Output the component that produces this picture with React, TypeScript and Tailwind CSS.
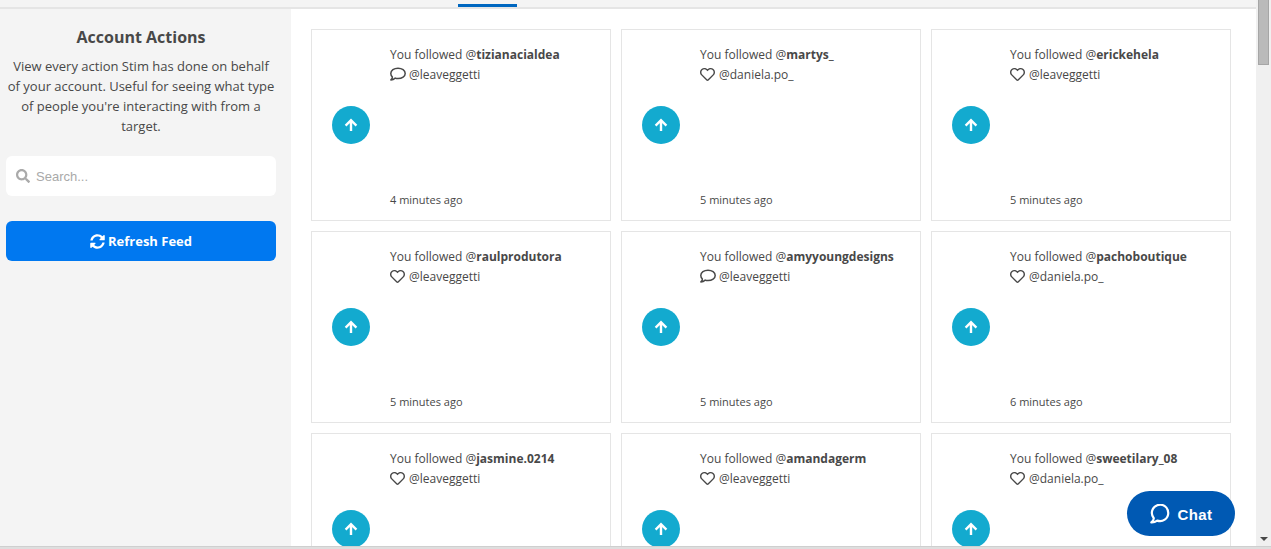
import { useState } from 'react';
import { FaRegHeart, FaSearch, FaSyncAlt } from 'react-icons/fa';

interface Action {
  username: string;
  type: 'like' | 'comment';
  target: string;
  time?: string;
}

const ACTIONS: Action[] = [
  { username: 'tizianacialdea', type: 'comment', target: 'leaveggetti', time: '4 minutes ago' },
  { username: 'martys_', type: 'like', target: 'daniela.po_', time: '5 minutes ago' },
  { username: 'erickehela', type: 'like', target: 'leaveggetti', time: '5 minutes ago' },
  { username: 'raulprodutora', type: 'like', target: 'leaveggetti', time: '5 minutes ago' },
  { username: 'amyyoungdesigns', type: 'comment', target: 'leaveggetti', time: '5 minutes ago' },
  { username: 'pachoboutique', type: 'like', target: 'daniela.po_', time: '6 minutes ago' },
  { username: 'jasmine.0214', type: 'like', target: 'leaveggetti' },
  { username: 'amandagerm', type: 'like', target: 'leaveggetti' },
  { username: 'sweetilary_08', type: 'like', target: 'daniela.po_' },
];

function CommentIcon() {
  return (
    <svg width="16" height="16" viewBox="0 0 16 16" fill="none" stroke="currentColor" strokeWidth="1.5" strokeLinejoin="round">
      <path d="M2.4 11C1.3 10 .8 8.800.8 7.500C.8 4.500 4 2.200 8 2.200S15.200 4.500 15.200 7.500S12 12.600 8 12.600C7 12.600 6 12.500 5.200 12.100C4 13.200 2.500 13.900.9 13.900C1.800 13 2.400 12 2.400 11Z" />
    </svg>
  );
}

function ArrowUpIcon() {
  return (
    <svg width="14" height="14" viewBox="0 0 14 14" fill="none" stroke="currentColor" strokeWidth="2.4">
      <path d="M7 13V2.400M1.600 7.600L7 2.200l5.400 5.400" />
    </svg>
  );
}

function ActionCard({ action }: { action: Action }) {
  return (
    <article className="flex h-48 items-center gap-5 border border-[#e5e5e5] bg-white px-5">
      <div className="flex size-[38px] shrink-0 items-center justify-center rounded-full bg-[#13aacf] text-white">
        <ArrowUpIcon />
      </div>
      <div className="flex h-full min-w-0 flex-col justify-between pt-[15px] pb-[10px] text-[12px] leading-5">
        <div>
          <p className="whitespace-nowrap">
            You followed @<strong>{action.username}</strong>
          </p>
          <p className="flex items-center gap-[3px]">
            <span className="-mt-0.5 flex w-4">
              {action.type === 'comment' ? <CommentIcon /> : <FaRegHeart size={15} />}
            </span>
            <span>@{action.target}</span>
          </p>
        </div>
        {action.time && <p className="text-[11px] leading-5">{action.time}</p>}
      </div>
    </article>
  );
}

function Sidebar() {
  const [query, setQuery] = useState('');

  return (
    <aside className="w-[291px] shrink-0 bg-[#f4f4f4] pt-[18px] pr-[15px] pl-[6px] text-center">
      <h1 className="text-[16px] leading-5 font-bold">Account Actions</h1>
      <p className="mt-[9px] text-[13px] leading-5">
        View every action Stim has done on behalf of your account. Useful for seeing what type of people
        you're interacting with from a target.
      </p>
      <label className="mt-5 flex h-10 items-center gap-[6px] rounded-md bg-white px-[10px]">
        <FaSearch size={14} className="shrink-0 text-[#aaaaaa]" />
        <input
          type="text"
          aria-label="Search"
          value={query}
          onChange={(e) => setQuery(e.target.value)}
          placeholder="Search..."
          className="h-10 w-full min-w-0 bg-transparent pt-px font-['Liberation_Sans',sans-serif] text-[13px] leading-5 placeholder-[#a9a9a9] outline-none"
        />
      </label>
      <button
        type="button"
        className="mt-[25px] flex h-10 w-full cursor-pointer items-center justify-center gap-[3px] rounded-md bg-[#0078f0] text-[13px] leading-5 font-bold text-white"
      >
        <FaSyncAlt size={15} />
        Refresh Feed
      </button>
    </aside>
  );
}

export default function App() {
  return (
    <div className="relative flex h-screen flex-col overflow-hidden bg-white font-['Open_Sans',sans-serif] text-[#484848]">
      <div className="flex min-h-0 flex-1">
        <div className="flex min-w-0 flex-1 flex-col">
          {/* Bottom edge of the nav bar with the active tab marker */}
          <header className="flex h-[9px] shrink-0 items-end border-b-2 border-[#e5e5e5] bg-[#f4f4f4] pl-[458px]">
            <div className="h-[3px] w-[59px] bg-[#0067c0]" />
          </header>

          <div className="flex min-h-0 flex-1">
            <Sidebar />
            <main className="min-w-0 flex-1 overflow-hidden pt-5 pr-[25px] pl-5">
              <div className="grid grid-cols-3 gap-[10px]">
                {ACTIONS.map((action) => (
                  <ActionCard key={action.username} action={action} />
                ))}
              </div>
            </main>
          </div>
        </div>

        {/* Scrollbar */}
        <div className="flex w-[15px] shrink-0 flex-col items-center justify-between bg-[#f0f0f0] pb-[5px]">
          <div className="h-[65px] w-[11px] border border-t-0 border-[#a6a6a6] bg-[#bababa]" />
          <svg width="8" height="4" viewBox="0 0 8 4" fill="#484848">
            <path d="M0 0h8L4 4z" />
          </svg>
        </div>
      </div>
      <div className="h-[3px] shrink-0 border-t border-[#cfcfcf] bg-[#dedede]" />

      <button
        type="button"
        className="absolute right-9 bottom-[13px] flex h-[45px] w-[108px] cursor-pointer items-center justify-center gap-2 rounded-full bg-[#0059b3] pt-0.5 font-['Liberation_Sans',sans-serif] text-[15px] leading-5 font-bold tracking-wide text-white"
      >
        <svg width="20" height="21" viewBox="0 0 20 21" fill="none" stroke="currentColor" strokeWidth="2.2" strokeLinejoin="round">
          <path d="M3.800 14.200A8.200 8.200 0 1 1 7.200 16.600Q4.500 18.600 1.300 18.400Q3.700 16.800 3.800 14.200Z" />
        </svg>
        Chat
      </button>
    </div>
  );
}
